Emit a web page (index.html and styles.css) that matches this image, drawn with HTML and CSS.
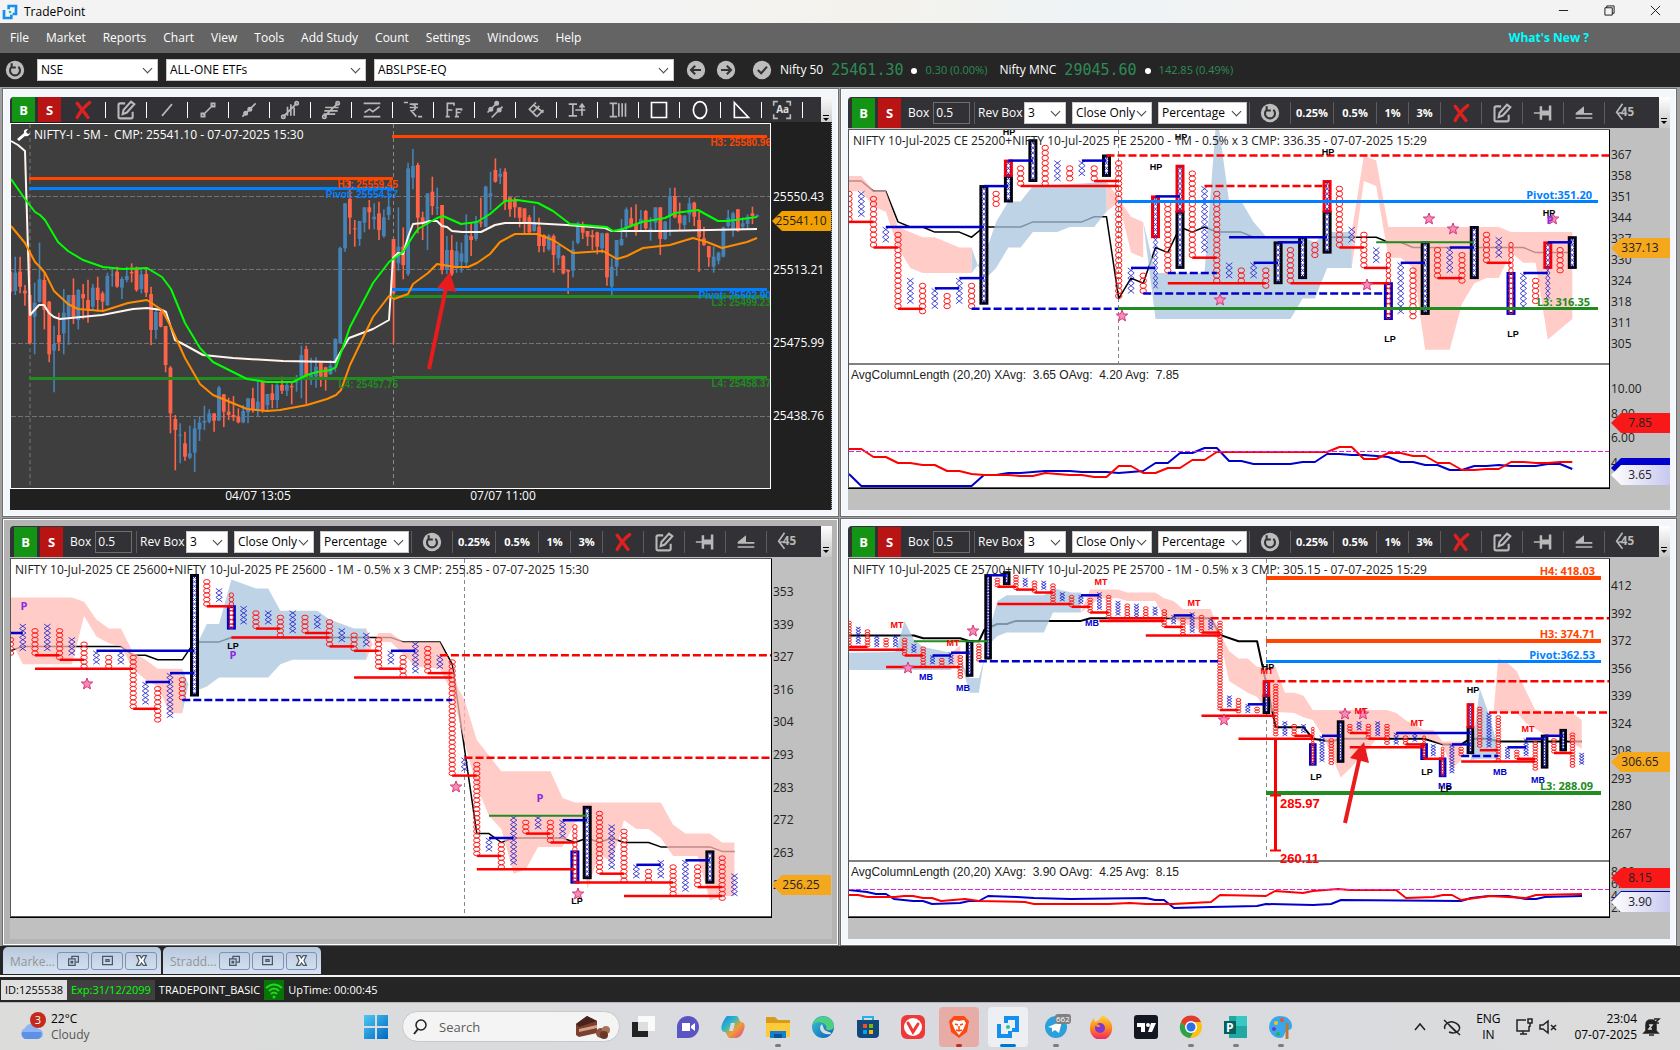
FILE: index.html
```html
<!DOCTYPE html>
<html lang="en">
<head>
    <meta charset="UTF-8">
    <meta name="viewport" content="width=device-width, initial-scale=1.0">
    <title>TradePoint</title>
    <link rel="stylesheet" href="styles.css">
</head>
<body>
    <!-- shared icons -->
    <svg class="defs" aria-hidden="true">
        <defs>
            <linearGradient id="tag-white"><stop offset="0" stop-color="#fff"/><stop offset="1" stop-color="#c8c8f0"/></linearGradient>
            <linearGradient id="win-blue" x2="1" y2="1"><stop offset="0" stop-color="#4cc8f4"/><stop offset="1" stop-color="#0067c0"/></linearGradient>
            <linearGradient id="rainbow" x2="1" y2="1"><stop offset="0" stop-color="#1a7ff0"/><stop offset=".35" stop-color="#2cb8c8"/><stop offset=".6" stop-color="#f0a030"/><stop offset="1" stop-color="#e0409a"/></linearGradient>
            <linearGradient id="fire" x2="0" y2="1"><stop offset="0" stop-color="#ffd83a"/><stop offset=".5" stop-color="#ff8a1e"/><stop offset="1" stop-color="#f0206a"/></linearGradient>
            <linearGradient id="edge" x2="1" y2="1"><stop offset="0" stop-color="#38c8d0"/><stop offset="1" stop-color="#0a5cb8"/></linearGradient>
        </defs>
        <symbol id="i-logo" viewBox="0 0 24 24"><path d="M3 9v12h11v-5M10 8V3h11v12h-5" fill="none" stroke="#1490f0" stroke-width="4"/><circle cx="12" cy="12" r="2" fill="#20c890"/></symbol>
        <symbol id="i-x" viewBox="0 0 24 24"><path d="M5 4l13 17M20 3Q10 11 5 21" fill="none" stroke="#e02020" stroke-width="4" stroke-linecap="round"/></symbol>
        <symbol id="i-edit" viewBox="0 0 24 24"><path d="M11 4H5a2 2 0 0 0-2 2v14a2 2 0 0 0 2 2h13a2 2 0 0 0 2-2v-6M8 17l1-5L18 2l4 3-9 10z" fill="none" stroke="#b8b8b8" stroke-width="2.5"/></symbol>
        <symbol id="i-refresh" viewBox="0 0 24 24"><circle cx="12" cy="12" r="11" fill="#bdbdbd"/><path d="M8 8a6 6 0 1 0 8 0M8 4v5h5" fill="none" stroke="#333" stroke-width="2.5"/></symbol>
        <symbol id="i-pin" viewBox="0 0 24 24"><path d="M1 12h9" fill="none" stroke="#b8b8b8" stroke-width="2"/><path d="M8 4h3v5h8V3h3v18h-3v-6h-8v5H8z" fill="#b8b8b8"/></symbol>
        <symbol id="i-eject" viewBox="0 0 24 24"><path d="M2 12l10-8v8z" fill="#b8b8b8"/><path d="M2 13h20M2 18h20" stroke="#b8b8b8" stroke-width="2"/></symbol>
        <symbol id="i-45" viewBox="0 0 24 24"><path d="M9 1L2 11l7 9M4 12h5" fill="none" stroke="#b8b8b8" stroke-width="2"/><text x="7" y="15" font-size="14" font-weight="bold" fill="#b8b8b8">45</text></symbol>
        <symbol id="i-restore" viewBox="0 0 16 16"><path d="M6 6V3h8v7h-3M2 6h8v8H2zM5 9h2v2H5z" fill="none" stroke="#46566c" stroke-width="1.5"/></symbol>
        <symbol id="i-max" viewBox="0 0 16 16"><path d="M2 3h12v10H2zM6 7h4v2H6z" fill="none" stroke="#46566c" stroke-width="1.5"/></symbol>
        <symbol id="i-close" viewBox="0 0 16 16"><path d="M2 2h4l2 3 2-3h4l-3 6 3 6h-4l-2-3-2 3H2l3-6z" fill="#fff" stroke="#46566c" stroke-width="1.5"/></symbol>
    </svg>

    <header class="titlebar">
        <svg class="logo"><use href="#i-logo"/></svg>
        <h1>TradePoint</h1>
        <div class="window-buttons">
            <button aria-label="Minimize"><svg viewBox="0 0 12 12"><path d="M1 6h10"/></svg></button>
            <button aria-label="Restore"><svg viewBox="0 0 12 12"><path d="M1 3h8v8H1zM3 3V1h8v8H9"/></svg></button>
            <button aria-label="Close"><svg viewBox="0 0 12 12"><path d="M1 1l10 10M11 1L1 11"/></svg></button>
        </div>
    </header>

    <nav class="menubar">
        <a href="#">File</a>
        <a href="#">Market</a>
        <a href="#">Reports</a>
        <a href="#">Chart</a>
        <a href="#">View</a>
        <a href="#">Tools</a>
        <a href="#">Add Study</a>
        <a href="#">Count</a>
        <a href="#">Settings</a>
        <a href="#">Windows</a>
        <a href="#">Help</a>
        <a href="#" class="whats-new">What's New ?</a>
    </nav>

    <div class="symbolbar">
        <button class="round" aria-label="Refresh"><svg><use href="#i-refresh"/></svg></button>
        <span class="pick exchange"><select aria-label="Exchange"><option>NSE</option></select></span>
        <span class="pick group"><select aria-label="Group"><option>ALL-ONE ETFs</option></select></span>
        <span class="pick symbol"><select aria-label="Symbol"><option>ABSLPSE-EQ</option></select></span>
        <button class="round back" aria-label="Previous"><svg viewBox="0 0 24 24"><circle cx="12" cy="12" r="11" fill="#bdbdbd"/><path d="M18 12H7M11 7l-5 5 5 5" fill="none" stroke="#333" stroke-width="2.5"/></svg></button>
        <button class="round next" aria-label="Next"><svg viewBox="0 0 24 24"><circle cx="12" cy="12" r="11" fill="#bdbdbd"/><path d="M6 12h11M13 7l5 5-5 5" fill="none" stroke="#333" stroke-width="2.5"/></svg></button>
        <button class="round check" aria-label="Apply"><svg viewBox="0 0 24 24"><circle cx="12" cy="12" r="11" fill="#bdbdbd"/><path d="M7 12l4 4 7-8" fill="none" stroke="#333" stroke-width="2.5"/></svg></button>
        <div class="quote"><span>Nifty 50</span><b>25461.30</b><i></i><em>0.30 (0.00%)</em></div>
        <div class="quote"><span>Nifty MNC</span><b>29045.60</b><i></i><em>142.85 (0.49%)</em></div>
    </div>

    <main class="mdi">
        <section class="panel">
            <div class="tools drawing">
                <button class="buy">B</button>
                <button class="sell">S</button>
                <button class="cell first" aria-label="Delete"><svg><use href="#i-x"/></svg></button>
                <button class="cell" aria-label="Edit"><svg><use href="#i-edit"/></svg></button>
                <button class="cell" aria-label="Line"><svg viewBox="0 0 24 24"><path d="M6 19L18 5"/></svg></button>
                <button class="cell" aria-label="Segment"><svg viewBox="0 0 24 24"><path d="M6 18L18 6M4 16h4v4H4zM16 4h4v4h-4z"/></svg></button>
                <button class="cell" aria-label="Ray"><svg viewBox="0 0 24 24"><path d="M4 20L20 4"/><circle cx="8" cy="16" r="2" class="solid"/><circle cx="13" cy="11" r="2" class="solid"/></svg></button>
                <button class="cell" aria-label="Vertical bars"><svg viewBox="0 0 24 24"><path d="M4 20L20 4M9 8v11M13 5v14M17 9v10"/><circle cx="4" cy="20" r="2"/><circle cx="20" cy="4" r="2"/></svg></button>
                <button class="cell" aria-label="Levels"><svg viewBox="0 0 24 24"><path d="M4 20L20 4M5 9h16M4 13h16M3 17h14"/><circle cx="4" cy="20" r="2"/><circle cx="20" cy="4" r="2"/></svg></button>
                <button class="cell" aria-label="Channel"><svg viewBox="0 0 24 24"><path d="M2 4h20M2 20h20M3 15l6-4 4 3 8-6"/></svg></button>
                <button class="cell" aria-label="Rupee"><svg viewBox="0 0 24 24"><path d="M1 3h5M8 5h10M8 9h10M10 5c7 0 6 8 0 8l6 7M18 20h5"/></svg></button>
                <button class="cell" aria-label="Fibonacci"><svg viewBox="0 0 24 24"><path d="M4 20V4h8v3M4 12h6M2 20h5M15 20v-9h6v2M15 15h5M13 20h5"/></svg></button>
                <button class="cell" aria-label="Parallel"><svg viewBox="0 0 24 24"><path d="M3 15L15 3M8 21L21 8"/><circle cx="7" cy="11" r="2" class="solid"/><circle cx="14" cy="4" r="2" class="solid"/><circle cx="17" cy="12" r="2" class="solid"/></svg></button>
                <button class="cell" aria-label="Pitchfork"><svg viewBox="0 0 24 24"><path d="M12 3L4 11l9 9M9 6l12 9M8 15l8-8M13 20l8-8"/></svg></button>
                <button class="cell" aria-label="Text"><svg viewBox="0 0 24 24"><path d="M2 5h10M2 19h10M7 5v14M10 12h12M18 5v14M15 9l3-4 3 4"/></svg></button>
                <button class="cell" aria-label="Text rows"><svg viewBox="0 0 24 24"><path d="M2 4h9M2 20h9M6 4v16M13 4v16M17 4v16M21 4v16"/></svg></button>
                <button class="cell white" aria-label="Rectangle"><svg viewBox="0 0 24 24"><path d="M3 3h18v18H3z"/></svg></button>
                <button class="cell white" aria-label="Ellipse"><svg viewBox="0 0 24 24"><ellipse cx="12" cy="12" rx="8" ry="10"/></svg></button>
                <button class="cell white" aria-label="Triangle"><svg viewBox="0 0 24 24"><path d="M4 3v18h17z"/></svg></button>
                <button class="cell" aria-label="Label"><svg viewBox="0 0 24 24"><path d="M2 7V2h5M17 2h5v5M22 17v5h-5M7 22H2v-5"/><text x="5" y="16" font-size="12">Aa</text></svg></button>
                <span class="cell last"></span>
                <span class="more"></span>
            </div>
            <svg class="chart" id="nifty" viewBox="10 122 822 388"></svg>
        </section>

        <section class="panel">
            <div class="tools">
                <button class="buy">B</button>
                <button class="sell">S</button>
                <label class="box">Box <input type="text" value="0.5"></label>
                <label class="rev">Rev Box <span class="pick"><select><option>3</option></select></span></label>
                <span class="pick method"><select aria-label="Method"><option>Close Only</option></select></span>
                <span class="pick scale"><select aria-label="Scale"><option>Percentage</option></select></span>
                <button class="cell" aria-label="Refresh"><svg><use href="#i-refresh"/></svg></button>
                <button class="cell pct">0.25%</button>
                <button class="cell pct">0.5%</button>
                <button class="cell one">1%</button>
                <button class="cell one">3%</button>
                <button class="cell" aria-label="Delete"><svg><use href="#i-x"/></svg></button>
                <button class="cell" aria-label="Edit"><svg><use href="#i-edit"/></svg></button>
                <button class="cell" aria-label="Pin"><svg><use href="#i-pin"/></svg></button>
                <button class="cell" aria-label="Eject"><svg><use href="#i-eject"/></svg></button>
                <button class="cell" aria-label="45 degrees"><svg><use href="#i-45"/></svg></button>
                <span class="more"></span>
            </div>
            <svg class="chart" id="straddle-25200" viewBox="848 128 822 382"></svg>
        </section>

        <section class="panel active">
            <div class="tools">
                <button class="buy">B</button>
                <button class="sell">S</button>
                <label class="box">Box <input type="text" value="0.5"></label>
                <label class="rev">Rev Box <span class="pick"><select><option>3</option></select></span></label>
                <span class="pick method"><select aria-label="Method"><option>Close Only</option></select></span>
                <span class="pick scale"><select aria-label="Scale"><option>Percentage</option></select></span>
                <button class="cell" aria-label="Refresh"><svg><use href="#i-refresh"/></svg></button>
                <button class="cell pct">0.25%</button>
                <button class="cell pct">0.5%</button>
                <button class="cell one">1%</button>
                <button class="cell one">3%</button>
                <button class="cell" aria-label="Delete"><svg><use href="#i-x"/></svg></button>
                <button class="cell" aria-label="Edit"><svg><use href="#i-edit"/></svg></button>
                <button class="cell" aria-label="Pin"><svg><use href="#i-pin"/></svg></button>
                <button class="cell" aria-label="Eject"><svg><use href="#i-eject"/></svg></button>
                <button class="cell" aria-label="45 degrees"><svg><use href="#i-45"/></svg></button>
                <span class="more"></span>
            </div>
            <svg class="chart" id="straddle-25600" viewBox="10 557 822 382"></svg>
        </section>

        <section class="panel">
            <div class="tools">
                <button class="buy">B</button>
                <button class="sell">S</button>
                <label class="box">Box <input type="text" value="0.5"></label>
                <label class="rev">Rev Box <span class="pick"><select><option>3</option></select></span></label>
                <span class="pick method"><select aria-label="Method"><option>Close Only</option></select></span>
                <span class="pick scale"><select aria-label="Scale"><option>Percentage</option></select></span>
                <button class="cell" aria-label="Refresh"><svg><use href="#i-refresh"/></svg></button>
                <button class="cell pct">0.25%</button>
                <button class="cell pct">0.5%</button>
                <button class="cell one">1%</button>
                <button class="cell one">3%</button>
                <button class="cell" aria-label="Delete"><svg><use href="#i-x"/></svg></button>
                <button class="cell" aria-label="Edit"><svg><use href="#i-edit"/></svg></button>
                <button class="cell" aria-label="Pin"><svg><use href="#i-pin"/></svg></button>
                <button class="cell" aria-label="Eject"><svg><use href="#i-eject"/></svg></button>
                <button class="cell" aria-label="45 degrees"><svg><use href="#i-45"/></svg></button>
                <span class="more"></span>
            </div>
            <svg class="chart" id="straddle-25700" viewBox="848 557 822 382"></svg>
        </section>
    </main>

    <div class="minimized">
        <div class="mini"><span>Marke...</span>
            <button aria-label="Restore"><svg><use href="#i-restore"/></svg></button>
            <button aria-label="Maximize"><svg><use href="#i-max"/></svg></button>
            <button aria-label="Close"><svg><use href="#i-close"/></svg></button>
        </div>
        <div class="mini"><span>Stradd...</span>
            <button aria-label="Restore"><svg><use href="#i-restore"/></svg></button>
            <button aria-label="Maximize"><svg><use href="#i-max"/></svg></button>
            <button aria-label="Close"><svg><use href="#i-close"/></svg></button>
        </div>
    </div>

    <div class="statusbar">
        <span class="id">ID:1255538</span>
        <span class="exp">Exp:31/12/2099</span>
        <span class="plan">TRADEPOINT_BASIC</span>
        <svg class="wifi" viewBox="0 0 20 20"><path d="M2 8q8-7 16 0M5 11q5-5 10 0M7 14q3-3 6 0" fill="none" stroke="#28d428" stroke-width="2"/><circle cx="10" cy="17" r="1.5" fill="#28d428"/></svg>
        <span class="uptime">UpTime: 00:00:45</span>
    </div>

    <footer class="taskbar">
        <div class="weather">
            <svg viewBox="0 0 30 30"><path d="M8 27a6 6 0 0 1 0-11 7 7 0 0 1 13 1 5 5 0 0 1 0 10z" fill="#8db4f4"/><path d="M8 27a6 6 0 0 1-3-7h19a5 5 0 0 1-3 7z" fill="#5f90e8"/><circle cx="21" cy="8" r="8" fill="#c42b1c"/><text x="21" y="12" font-size="11" text-anchor="middle" fill="#fff">3</text></svg>
            <p>22°C<br><span>Cloudy</span></p>
        </div>
        <nav class="apps">
            <a href="#" class="start" aria-label="Start"><svg viewBox="0 0 24 24"><path d="M0 0h11v11H0zM13 0h11v11H13zM0 13h11v11H0zM13 13h11v11H13z" fill="url(#win-blue)"/></svg></a>
            <label class="search">
                <svg viewBox="0 0 16 16"><circle cx="8" cy="6" r="5" fill="none" stroke="#222" stroke-width="1.5"/><path d="M5 10l-4 5" stroke="#222" stroke-width="2"/></svg>
                <input type="search" placeholder="Search">
                <svg class="cake" viewBox="0 0 36 24"><path d="M1 9L12 1l10 5v12L4 22 1 20z" fill="#7a4030"/><path d="M1 9L12 1l10 5L4 12z" fill="#4a241c"/><path d="M4 14l18-4v3L4 17z" fill="#d8a088"/><circle cx="26" cy="18" r="5" fill="#8a5440"/><circle cx="31" cy="15" r="4" fill="#a87458"/><circle cx="29" cy="20" r="4" fill="#6a3828"/></svg>
            </label>
            <a href="#" aria-label="Task view"><svg viewBox="0 0 24 24"><path d="M1 7h16v15H1z" fill="#222"/><path d="M7 1h17v15H7z" fill="#fff" opacity=".85"/></svg></a>
            <a href="#" aria-label="Chat"><svg viewBox="0 0 24 24"><path d="M1 23V12a11 11 0 1 1 11 11z" fill="#5a54c4"/><path d="M6 8h8v8H6zM15 11l4-3v8l-4-3z" fill="#fff"/></svg></a>
            <a href="#" aria-label="Copilot"><svg viewBox="0 0 24 24"><path d="M7 1h8c3 0 3 5 5 6 5 0 4 6 2 10s-4 6-8 6H9c-3 0-3-5-5-6-5 0-4-6-2-10S5 1 7 1z" fill="url(#rainbow)"/><path d="M10 8h4l-2 8H8z" fill="#dadbe0"/></svg></a>
            <a href="#" class="open" aria-label="Explorer"><svg viewBox="0 0 24 24"><path d="M0 2h9l3 3h12v17H0z" fill="#d89a18"/><path d="M0 8h24v14H0z" fill="#fccb3c"/><path d="M4 16h16v7H4z" fill="#1680d0"/><path d="M8 19h8v4H8z" fill="#0a5494"/></svg></a>
            <a href="#" aria-label="Edge"><svg viewBox="0 0 24 24"><circle cx="12" cy="12" r="11" fill="url(#edge)"/><path d="M2 9C6-2 23 0 23 11c0 5-7 5-8 3 2-5-6-9-13-5z" fill="#4cd080"/><path d="M11 9c-5 4 0 12 9 10 2-2-6-2-7-5z" fill="#dadbe0"/></svg></a>
            <a href="#" aria-label="Store"><svg viewBox="0 0 24 24"><path d="M7 6V2h10v4" fill="none" stroke="#24b0e8" stroke-width="2"/><path d="M1 5h22v14q0 4-4 4H5q-4 0-4-4z" fill="#12487c"/><path d="M7 9h4v4H7z" fill="#f25022"/><path d="M13 9h4v4h-4z" fill="#7fba00"/><path d="M7 15h4v4H7z" fill="#00a4ef"/><path d="M13 15h4v4h-4z" fill="#ffb900"/></svg></a>
            <a href="#" aria-label="Vivaldi"><svg viewBox="0 0 24 24"><rect width="24" height="24" rx="6" fill="#ef3939"/><circle cx="12" cy="12" r="9" fill="#fff"/><path d="M7 8l5 9 5-8" fill="none" stroke="#ef3939" stroke-width="3" stroke-linecap="round"/></svg></a>
            <a href="#" class="open alert" aria-label="Brave"><svg viewBox="0 0 24 24"><path d="M7 1h10l5 5-2 11-8 6-8-6L2 6z" fill="#fb4a14"/><path d="M7 5l5 1 5-1 2 3-3 7-4 5-4-5-3-7z" fill="#fff"/><path d="M8 9l3 1M16 9l-3 1M12 11v5M9 15l3 1 3-1" stroke="#fb4a14" stroke-width="1.5"/></svg></a>
            <a href="#" class="open current" aria-label="TradePoint"><svg><use href="#i-logo"/></svg></a>
            <a href="#" class="open badge" aria-label="Telegram"><svg viewBox="0 0 24 24"><circle cx="12" cy="12" r="11" fill="#2aa0dc"/><path d="M4 12l14-6-3 12-4-3-3 2v-4z" fill="#fff"/></svg><span>662</span></a>
            <a href="#" aria-label="Firefox"><svg viewBox="0 0 24 24"><path d="M13 0c8 4 11 9 10 14a11 11 0 0 1-22 0C1 8 3 5 5 3l1 4c3-1 6-4 7-7z" fill="url(#fire)"/><circle cx="11" cy="13" r="5" fill="#8038d0"/><path d="M6 9q5 0 5 3H8z" fill="#ff9a1e"/></svg></a>
            <a href="#" aria-label="TradingView"><svg viewBox="0 0 24 24"><rect width="24" height="24" rx="3" fill="#131722"/><path d="M3 8h8v9H7v-5H3zM17 8h5l-4 9h-4z" fill="#fff"/><circle cx="14" cy="10" r="2" fill="#fff"/></svg></a>
            <a href="#" class="open" aria-label="Chrome"><svg viewBox="0 0 24 24"><circle cx="12" cy="12" r="11" fill="#fbc116"/><path d="M2 7a11 11 0 0 1 20 0H12L8 14z" fill="#e33b2e"/><path d="M2 7a11 11 0 0 0 9 16l5-9H8z" fill="#2ba24c"/><circle cx="12" cy="12" r="6" fill="#fff"/><circle cx="12" cy="12" r="4.5" fill="#2a6fe8"/></svg></a>
            <a href="#" class="open" aria-label="Publisher"><svg viewBox="0 0 24 24"><path d="M5 1h18v22H5z" fill="#20a8a4"/><path d="M12 1h11v10H12z" fill="#38c8c4"/><path d="M0 6h12v13H0z" fill="#04605e"/><text x="2" y="17" font-size="12" font-weight="bold" fill="#fff">P</text></svg></a>
            <a href="#" class="open" aria-label="Paint"><svg viewBox="0 0 24 24"><path d="M11 1c8 0 12 5 12 10s-4 3-6 5-1 7-6 7A11 11 0 0 1 11 1z" fill="#38a8ec"/><circle cx="7" cy="8" r="2" fill="#f4c020"/><circle cx="13" cy="5" r="2" fill="#f05030"/><circle cx="5" cy="14" r="2" fill="#6a3cc8"/><circle cx="9" cy="19" r="2" fill="#28b050"/><path d="M18 8v16" stroke="#b87838" stroke-width="3"/></svg></a>
        </nav>
        <div class="tray">
            <svg viewBox="0 0 20 20"><path d="M5 13l5-6 5 6"/></svg>
            <svg viewBox="0 0 20 20"><path d="M2 3l16 15M3 12c-2-4 4-8 8-7s8 4 6 8-8 3-10 2M7 8l7 7"/></svg>
            <p class="lang">ENG<br>IN</p>
            <svg class="net" viewBox="0 0 20 20"><path d="M12 3H3v11h12V9M9 14v3M6 17h7M14 2h4v4h-4zM16 6v4"/></svg>
            <svg class="net" viewBox="0 0 20 20"><path d="M2 8h3l5-4v12l-5-4H2zM13 8l5 5M18 8l-5 5"/></svg>
            <p class="clock">23:04<br>07-07-2025</p>
            <svg class="bell" viewBox="0 0 20 20"><path d="M4 14V8q0-5 5-5 5 0 5 5v6l2 2H2z" fill="#222"/><path d="M7 18h5M12 2h5l-4 4h4" stroke="#222"/><path d="M7 8h3l-3 4h3" stroke="#ddd"/></svg>
        </div>
    </footer>

    <script src="charts.js"></script>
</body>
</html>
```
FILE: styles.css
```css
* {
    box-sizing: border-box;
}

body {
    display: flex;
    flex-direction: column;
    min-height: 100vh;
    margin: 0;
    background-color: #252525;
    font-family: "Open Sans", "Noto Sans", sans-serif;
    font-size: 12px;
    line-height: 16px;
}

button, select, input {
    font: inherit;
    color: inherit;
    margin: 0;
    padding: 0;
    border: 0;
    background: none;
}

a {
    color: inherit;
    text-decoration: none;
}

p {
    margin: 0;
}

.defs {
    position: absolute;
    width: 0;
    height: 0;
}

/* title and menu */
.titlebar {
    display: flex;
    align-items: center;
    height: 23px;
    padding-left: 2px;
    background: linear-gradient(90deg, #f3f3f3 40%, #f4f2ec 52%, #eef3f6 65%, #f3f3f3 75%);
}

.titlebar h1 {
    margin: 0 0 0 6px;
    font-size: 12px;
    font-weight: normal;
}

.logo {
    width: 16px;
    height: 16px;
}

.window-buttons {
    display: flex;
    margin-left: auto;
    padding-right: 2px;
}

.window-buttons button {
    width: 46px;
    height: 23px;
}

.window-buttons svg {
    width: 11px;
    height: 11px;
    fill: none;
    stroke: #111;
}

.menubar {
    display: flex;
    align-items: center;
    gap: 17px;
    height: 30px;
    padding: 0 91px 0 10px;
    background-color: #646464;
    color: #fff;
}

.whats-new {
    margin-left: auto;
    color: #00ffff;
    font-weight: bold;
}

/* symbol row */
.symbolbar {
    display: flex;
    align-items: center;
    height: 34px;
    padding-left: 5px;
    color: #fff;
}

.round, .round svg {
    display: block;
    width: 20px;
    height: 20px;
}

.pick {
    position: relative;
    display: inline-block;
    height: 22px;
    background-color: #fff;
    border: 1px solid #c8c8c8;
    color: #000;
}

.pick select {
    appearance: none;
    display: block;
    width: 100%;
    height: 20px;
    padding-left: 3px;
}

.pick::after {
    content: "";
    position: absolute;
    right: 6px;
    top: 5px;
    width: 6px;
    height: 6px;
    border: solid #444;
    border-width: 0 1px 1px 0;
    transform: rotate(45deg);
    pointer-events: none;
}

.exchange {
    width: 121px;
    margin-left: 12px;
}

.group {
    width: 200px;
    margin-left: 8px;
}

.symbol {
    width: 300px;
    margin-left: 8px;
}

.back {
    margin-left: 12px;
}

.next {
    margin-left: 10px;
}

.check {
    margin: 0 8px 0 16px;
}

.quote {
    display: flex;
    align-items: center;
    gap: 8px;
    margin-right: 12px;
}

.quote b {
    color: #2e8b57;
    font: 15px "DejaVu Sans Mono", monospace;
}

.quote i {
    width: 6px;
    height: 6px;
    margin-top: 2px;
    border-radius: 50%;
    background-color: #fff;
}

.quote em {
    color: #2e8b57;
    font-style: normal;
    font-size: 11px;
}

/* chart windows */
.mdi {
    display: grid;
    grid-template-columns: 1fr 1fr;
    gap: 1px;
    padding: 1px 3px 0 2px;
    background-color: #a0a0a0;
}

.panel {
    min-width: 0;
    padding: 8px 6px 6px 7px;
    background-color: #f3f7fc;
    border: 1px solid #6e6e6e;
    box-shadow: inset 0 0 0 1px #fff;
}

.panel:nth-child(n+3) {
    padding-top: 7px;
}

.panel.active {
    background-color: #b4b4b4;
}

.tools {
    display: flex;
    align-items: center;
    height: 31px;
    padding-left: 4px;
    background-color: #323236;
    border-radius: 4px 0 0 0;
    color: #fff;
    overflow: hidden;
}

.tools.drawing {
    height: 25px;
    padding-left: 2px;
}

.buy, .sell {
    width: 23px;
    height: 30px;
    margin-right: 3px;
    background-color: #149414;
    font: bold 13px "Open Sans", sans-serif;
    flex-shrink: 0;
}

.sell {
    margin-right: 0;
    background-color: #b81414;
}

.box {
    display: flex;
    align-items: center;
    gap: 4px;
    width: 74px;
    height: 22px;
    padding-left: 7px;
    border-right: 1px solid #5c5c5c;
}

.box input {
    width: 37px;
    height: 22px;
    padding-left: 2px;
    border: 1px solid #6e6e6e;
    margin-left: auto;
    margin-right: 5px;
}

.rev {
    display: flex;
    align-items: center;
    justify-content: space-between;
    width: 91px;
    padding-left: 3px;
    white-space: nowrap;
}

.rev .pick {
    width: 42px;
}

.method {
    width: 80px;
    margin-left: 6px;
}

.scale {
    width: 89px;
    margin: 0 2px 0 6px;
}

.tools .pick::after {
    right: 6px;
}

.cell {
    display: flex;
    align-items: center;
    justify-content: center;
    width: 41px;
    height: 22px;
    border-left: 1px solid #5c5c5c;
    flex-shrink: 0;
    font-weight: bold;
    font-size: 11px;
}

.cell svg {
    width: 20px;
    height: 20px;
    fill: none;
    stroke: #b8b8b8;
    stroke-width: 2;
}

.cell svg use, .cell svg text {
    stroke: none;
}

.cell svg text {
    fill: #ddd;
}

.solid {
    fill: #b8b8b8;
}

.white svg {
    stroke: #fff;
}

.pct {
    width: 43px;
}

.one {
    width: 32px;
}

.drawing .cell {
    height: 16px;
    border-color: #fff;
}

.drawing .first {
    width: 44px;
    border: 0;
}

.drawing .last {
    width: 17px;
}

.more {
    width: 11px;
    height: 31px;
    margin-left: auto;
    background: linear-gradient(#fff, #c8c8c8);
    flex-shrink: 0;
    position: relative;
}

.more::before {
    content: "";
    position: absolute;
    left: 2px;
    bottom: 9px;
    width: 6px;
    height: 1px;
    background-color: #000;
}

.more::after {
    content: "";
    position: absolute;
    left: 2px;
    bottom: 4px;
    border: 3px solid transparent;
    border-top-color: #000;
    border-bottom: 0;
}

.chart {
    display: block;
    width: 100%;
    height: auto;
}

/* chart texts */
.chart text {
    font-family: "Open Sans", "Noto Sans", sans-serif;
    font-size: 12px;
}

.chart .level {
    font: bold 11px "Open Sans", sans-serif;
}

.chart .mark {
    font: bold 9px "Liberation Sans", sans-serif;
}

.chart .wide {
    font: bold 10px "Liberation Sans", sans-serif;
}

.chart .study {
    font: 12px "Liberation Sans", sans-serif;
}

.chart .target {
    font: bold 13px "Liberation Sans", sans-serif;
}

/* minimized windows */
.minimized {
    display: flex;
    flex-grow: 1;
    gap: 2px;
    height: 31px;
    padding: 1px 0 1px 3px;
    border-bottom: 2px solid #f4f4f4;
}

.mini {
    display: flex;
    align-items: center;
    gap: 2px;
    width: 158px;
    padding: 0 4px 0 7px;
    background: linear-gradient(#b8c8dc, #d8e4f2);
    border-radius: 5px 5px 0 0;
    color: #949494;
}

.mini span {
    flex-grow: 1;
    padding-top: 3px;
}

.mini button {
    width: 32px;
    height: 18px;
    border: 1px solid #7d92b4;
    border-radius: 3px;
}

.mini svg {
    display: block;
    width: 13px;
    height: 13px;
    margin: 0 auto;
}

.statusbar {
    display: flex;
    align-items: center;
    height: 25px;
    padding-left: 1px;
    color: #fff;
}

.statusbar span {
    height: 20px;
    padding: 2px 4px;
    font-size: 11px;
    white-space: nowrap;
}

.statusbar .id {
    background-color: #e0e0e0;
    color: #000;
}

.statusbar .exp {
    background-color: #404040;
    color: #00ff00;
}

.wifi {
    width: 20px;
    height: 20px;
    background-color: #067406;
}

/* taskbar */
.taskbar {
    display: flex;
    align-items: center;
    height: 48px;
    background: linear-gradient(90deg, #dcdcda, #d8dae0 60%, #dcdcdc);
    border-top: 1px solid #b8b8b8;
}

.weather {
    display: flex;
    align-items: center;
    gap: 4px;
    width: 355px;
    padding-left: 17px;
}

.weather svg {
    width: 30px;
    height: 30px;
}

.weather span {
    color: #555;
}

.apps {
    display: flex;
    align-items: center;
}

.apps a {
    position: relative;
    display: flex;
    align-items: center;
    justify-content: center;
    width: 45px;
    height: 40px;
}

.apps a svg {
    width: 24px;
    height: 24px;
}

.apps .start {
    width: 42px;
    margin-right: 5px;
}

.search {
    display: flex;
    align-items: center;
    gap: 10px;
    width: 218px;
    height: 31px;
    padding: 0 8px 0 10px;
    background-color: #f4f4f4;
    border: 1px solid #c8c8c8;
    border-radius: 16px;
}

.search svg {
    width: 16px;
    height: 16px;
    flex-shrink: 0;
}

.search input {
    width: 100%;
    font-size: 13px;
}

.search input::placeholder {
    color: #5c5c5c;
}

.search .cake {
    width: 36px;
    height: 24px;
}

.apps .open::after {
    content: "";
    position: absolute;
    bottom: 0;
    width: 6px;
    height: 3px;
    border-radius: 2px;
    background-color: #7c7c7c;
}

.apps .alert {
    width: 40px;
    margin: 0 4px;
    background-color: #e8aca6;
    border-radius: 4px;
}

.apps .alert::after {
    background-color: #c42b1c;
}

.apps .current {
    width: 40px;
    margin: 0 5px;
    background-color: #eeeff2;
    border-radius: 4px;
}

.apps .current::after {
    width: 16px;
    background-color: #0078d4;
}

.badge span {
    position: absolute;
    top: 7px;
    left: 22px;
    padding: 0 1px;
    border-radius: 3px;
    background-color: #808080;
    color: #fff;
    font-size: 8px;
    line-height: 10px;
}

.tray {
    display: flex;
    align-items: center;
    gap: 12px;
    margin-left: auto;
    padding-right: 18px;
}

.tray svg {
    width: 20px;
    height: 20px;
    fill: none;
    stroke: #222;
    stroke-width: 1.5;
}

.lang {
    width: 28px;
    text-align: center;
}

.tray .net + .net {
    margin-left: -8px;
}

.clock {
    text-align: right;
    margin-left: 4px;
}

.tray .bell {
    margin-left: -7px;
}
```
FILE: charts.js
```javascript
const RED = "#ff0000", BLUE = "#0000cd", GREEN = "#228b22", ORANGE = "#ff4500", SKY = "#0080ff", BLACK = "#000";

function line(x1, y1, x2, y2, color, width, dash) {
    return `<line x1="${x1}" y1="${y1}" x2="${x2}" y2="${y2}" stroke="${color}" stroke-width="${width}"${dash ? ` stroke-dasharray="${dash}"` : ""}/>`;
}

function text(x, y, str, color, cls, anchor) {
    return `<text x="${x}" y="${y}" fill="${color}" class="${cls || ""}" text-anchor="${anchor || "start"}" xml:space="preserve">${str}</text>`;
}

function poly(points, color, width) {
    return `<polyline points="${points}" fill="none" stroke="${color}" stroke-width="${width}" stroke-linejoin="round"/>`;
}

function rect(x, y, w, h, fill, extra) {
    return `<rect x="${x}" y="${y}" width="${w}" height="${h}" fill="${fill}" ${extra || ""}/>`;
}

// price tag that points at the axis
function tag(x, y, str, fill, color) {
    return `<path d="M${x} ${y}l10 -10h49v20h-49z" fill="${fill}"/>` + text(x + 29, y + 4, str, color || "#222", "", "middle");
}

function star(x, y) {
    let pts = "";
    for (let i = 0; i < 10; i++) {
        const r = i % 2 ? 2.6 : 6;
        const a = Math.PI * (i / 5 - 0.5);
        pts += `${(x + r * Math.cos(a)).toFixed(1)},${(y + r * Math.sin(a)).toFixed(1)} `;
    }
    return `<polygon points="${pts}" fill="#f48cb4" stroke="#d8327c"/>`;
}

function arrow(x1, y1, x2, y2, head) {
    return line(x1, y1, x2, y2, "#e81c1c", 4) + `<polygon points="${head}" fill="#e81c1c"/>`;
}

function clip(id, x, y, w, h) {
    return `<clipPath id="${id}"><rect x="${x}" y="${y}" width="${w}" height="${h}"/></clipPath>`;
}

// point and figure chart: columns alternate O and X, rows count boxes downwards
function pointFigure(c) {
    const px = i => +(c.x0 + i * c.dx).toFixed(1);
    const py = r => +(c.y0 + r * c.dy).toFixed(1);
    const pts = s => s.split(" ").map(p => p.split(",")).map(p => `${px(+p[0])},${py(+p[1])}`).join(" ");
    let out = "";

    out += line(c.session, c.top, c.session, c.split || c.bottom, "#888", 1, "4 3");
    out += poly(pts(c.average), BLACK, c.thick || 1.5);
    c.pink.forEach(b => out += `<polygon points="${pts(b)}" fill="#ffbbb6" opacity=".75"/>`);
    c.blue.forEach(b => out += `<polygon points="${pts(b)}" fill="#a8c4dc" opacity=".75"/>`);

    c.boxes.forEach(([i, a, b, color]) => {
        out += rect(px(i) - c.bw, py(a - 0.4), c.bw * 2, py(b + 0.4) - py(a - 0.4), "#fff", `stroke="${color}" stroke-width="3"`);
    });

    let xs = "", os = "";
    c.columns.split(" ").forEach((col, i) => {
        const [a, b] = col.split(",").map(Number);
        const boxed = c.boxes.some(box => box[0] === i);
        for (let r = a; r <= b; r++) {
            const x = px(i), y = py(r), w = boxed ? c.rx - 1 : c.rx, h = c.dy / 2;
            if (i % 2) {
                xs += `M${x - w} ${y - h}L${x + w} ${y + h}M${x + w} ${y - h}L${x - w} ${y + h}`;
            } else {
                os += `M${x - w} ${y}a${w} ${h} 0 1 0 ${w * 2} 0a${w} ${h} 0 1 0 ${-w * 2} 0`;
            }
        }
    });
    out += `<path d="${xs}" stroke="#1c1ccc" stroke-width=".8"/>`;
    out += `<path d="${os}" fill="none" stroke="#ff1a1a" stroke-width="1"/>`;

    const flat = (s, color, dash, w) => s.split(" ").forEach(l => {
        const [a, b, r] = l.split(",").map(Number);
        out += line(px(a), py(r), b > 99 ? b : px(b), py(r), color, w, dash);
    });
    flat(c.sell, RED, "", 2.5);
    flat(c.buy, BLUE, "", 2.5);
    flat(c.green, GREEN, "", 2);
    flat(c.buyDash, BLUE, "8 3", 2.5);
    flat(c.sellDash, RED, "8 3", 2.5);
    c.levels.forEach(l => out += line(l[0], l[1], l[2], l[1], l[3], l[4] || 3));
    return out;
}

function frame(id, c, body, axis) {
    const x = c.left, w = 761;
    document.getElementById(id).innerHTML =
        clip(id + "-clip", x, c.top, w, c.bottom - c.top) +
        rect(x - 1, c.top - 2, 823, 384, "#c0c0c0") +
        rect(x, c.top, w, c.bottom - c.top, "#fff") +
        `<g clip-path="url(#${id}-clip)">${body}</g>` +
        rect(x + 0.5, c.top - 0.5, w, c.bottom - c.top, "none", 'stroke="#555"') +
        line(x - 1, c.bottom + 0.5, x + w + 1, c.bottom + 0.5, BLACK, 1) +
        line(x + w + 0.5, c.top, x + w + 0.5, c.bottom + 1, BLACK, 1) + axis;
}

function scale(x, y, step, labels, color) {
    return labels.split(" ").map((l, i) => text(x, Math.round(y + i * step) + 4, l, color || "#222")).join("");
}

/* NIFTY-I candles: colour, high, body top, body bottom, low (three steps per pixel) */
const candles = `r,415,455,515,520 b,410,458,513,525 r,410,455,500,520 r,495,512,520,557 r,390,525,670,672
b,488,548,590,703 b,368,478,545,548 r,455,480,570,628 r,543,545,703,727 b,617,672,692,817
r,578,645,667,693 b,507,578,640,703 b,525,525,590,675 r,475,525,590,612 b,507,510,600,628
r,492,522,535,598 r,479,540,568,608 b,492,503,560,570 r,470,503,540,575 r,514,520,545,570
b,458,468,555,558 b,450,463,465,500 r,440,455,500,503 b,470,477,503,537 b,440,468,480,487
r,430,456,460,487 r,440,445,510,515 b,448,463,507,520 r,450,462,518,531 r,500,522,630,676
b,563,576,630,658 r,570,576,620,622 r,618,618,735,757 r,738,743,880,940 r,885,897,930,1051
b,910,944,946,1030 r,935,970,1010,1022 b,917,1000,1013,1018 b,897,925,998,1056 b,888,908,928,963
b,857,903,908,930 b,868,880,905,910 r,880,880,902,935 b,798,803,902,903 r,822,823,875,921
r,833,875,885,900 r,828,885,892,903 r,865,890,907,910 b,855,873,907,910 b,835,835,877,910
r,803,835,870,878 b,772,845,873,888 r,785,785,873,878 b,822,822,855,872 r,793,820,840,865
b,790,795,840,865 r,770,795,812,822 b,785,795,812,828 r,787,798,802,853 b,765,785,785,815
b,677,705,770,835 r,677,687,770,852 b,713,765,775,795 b,712,740,770,803 r,728,728,770,800
r,740,742,772,812 b,720,737,762,765 b,655,657,730,755 b,380,384,670,672 b,250,250,385,395
r,183,237,293,343 r,300,325,328,380 b,303,303,357,378 b,262,262,308,337 r,240,262,277,328
b,250,290,298,328 r,245,280,330,360 b,268,292,348,353 b,222,260,285,300 r,357,357,520,672
b,262,380,430,452 r,322,380,435,478 b,128,145,462,468 b,87,138,173,208 r,128,135,293,340
r,275,292,308,360 b,220,220,310,390 r,170,215,258,285 b,203,262,265,285 r,255,255,450,463
b,348,390,450,463 r,345,390,463,468 b,365,393,445,458 b,368,400,425,458 b,283,345,428,440
r,307,348,360,408 b,288,305,357,362 r,233,307,310,322 b,197,200,320,322 b,155,220,228,270
r,115,150,185,188 b,145,162,170,192 r,145,155,245,270 r,232,232,268,290 r,232,243,262,293
r,262,262,293,322 r,265,265,312,340 r,285,292,337,345 b,257,308,333,335 r,293,320,378,397
r,343,345,378,397 b,343,347,388,392 r,343,348,405,458 b,375,375,415,435 r,405,408,460,463
r,450,450,455,522 b,362,388,452,472 b,305,310,368,373 r,305,315,338,357 r,333,333,350,378
r,330,345,352,390 r,335,337,380,403 b,338,340,385,400 r,338,340,472,497 b,415,440,500,525
b,360,360,440,468 b,297,357,375,378 b,262,268,325,352 r,262,295,318,322 r,253,310,330,347
b,270,297,310,335 r,270,273,325,335 b,292,325,330,362 b,262,262,308,332 r,262,262,357,405
b,303,305,357,360 b,203,228,285,348 r,203,228,292,295 r,248,285,310,330 b,285,287,315,328
b,232,250,283,307 r,245,248,290,318 r,275,300,352,455 r,320,355,375,378 r,377,378,412,440
b,380,410,440,458 b,395,398,422,433 b,320,322,410,412 b,270,293,318,323 b,275,280,330,350
r,267,268,333,335 b,292,310,320,328 b,283,290,312,328 r,260,280,288,312 b,283,286,290,292`;

function drawNifty() {
    const y = v => 120 + v / 3;
    let body = "";
    [196, 269, 343, 416].forEach(g => body += line(11, g + 0.5, 770, g + 0.5, "#747474", 1, "5 2"));
    body += line(30, 124, 30, 488, "#777", 1, "4 3") + line(393.5, 124, 393.5, 488, "#888", 1, "4 3");

    candles.split(/\s+/).forEach((c, i) => {
        const p = c.split(",");
        const color = p[0] === "r" ? "#ff6347" : "#4682b4";
        const x = 10.4 + i * 4.85;
        const [hi, a, b, lo] = p.slice(1).map(v => y(+v));
        body += line(x, hi, x, lo, color, 1.6) + rect(x - 1.9, a, 3.8, Math.max(1, b - a), color);
    });

    body += line(29, 178.5, 393, 178.5, ORANGE, 3) + line(29, 188.5, 393, 188.5, SKY, 3) + line(29, 378.5, 393, 378.5, GREEN, 3);
    body += line(392, 136.5, 767, 136.5, ORANGE, 3) + line(392, 289.5, 767, 289.5, SKY, 3);
    body += line(392, 296.5, 767, 296.5, GREEN, 3) + line(392, 377.5, 767, 377.5, GREEN, 3);

    body += poly("11,141 18,145 25,151 30,315 39,305 44,305 49,313 54,317 60,319 102,315 133,309 147,308 162,310 166,312 175,340 183,344 203,355 233,358 283,361 335,362 340,353 349,338 373,329 389,320 393,258 398,253 403,254 408,237 413,224 423,223 430,221 437,221 442,226 447,227 452,231 462,232 481,232 495,225 505,223 530,223 567,225 605,228 612,231 663,231 757,229", "#fff5ee", 2);
    body += poly("11,226 25,243 35,262 40,267 45,273 54,291 68,304 78,309 103,311 128,303 147,300 162,310 171,327 185,358 200,384 213,395 247,409 267,411 280,410 307,405 327,399 336,395 341,390 350,365 373,317 389,296 394,299 408,294 413,284 428,273 437,264 455,267 468,267 477,263 490,254 500,242 515,234 537,234 553,240 573,253 603,251 617,259 627,256 643,248 670,245 693,238 707,242 722,248 747,242 757,238", "#ff8c00", 2);
    body += poly("11,179 25,199 35,212 40,215 45,220 58,242 68,251 83,260 103,267 123,269 147,268 162,277 171,289 185,323 200,348 213,362 247,379 267,382 293,382 307,375 317,372 331,370 336,367 350,327 373,283 389,262 403,252 413,236 418,229 437,218 443,216 461,224 477,222 490,214 505,201 517,200 538,203 553,211 570,224 607,227 613,231 623,229 642,222 665,218 675,213 698,210 718,221 728,221 757,217", "#00ff00", 2);

    body += text(398, 188, "H3: 25559.45", ORANGE, "wide", "end") + text(398, 198, "Pivot: 25554.57", SKY, "wide", "end") + text(398, 388, "L4: 25457.75", GREEN, "wide", "end");
    body += text(771, 146, "H3: 25580.96", ORANGE, "wide", "end") + text(771, 299, "Pivot: 25502.90", SKY, "wide", "end");
    body += text(771, 306, "L3: 25499.23", GREEN, "wide", "end") + text(771, 387, "L4: 25458.37", GREEN, "wide", "end");
    body += text(34, 139, "NIFTY-I - 5M -  CMP: 25541.10 - 07-07-2025 15:30", "#fff");
    body += '<path d="M17 139l7-6q-1-4 4-4l-2 3 2 2 2-1q-1 4-5 3l-6 5z" fill="#fff"/>';
    body += arrow(429, 369, 446, 288, "450,272 437,288 456,292");

    document.getElementById("nifty").innerHTML =
        clip("nifty-clip", 10, 123, 762, 367) +
        rect(10, 122, 822, 388, "#202020") +
        rect(11, 124, 759, 364, "#3e3e3e") +
        `<g clip-path="url(#nifty-clip)">${body}</g>` +
        rect(10.5, 123.5, 760, 365, "none", 'stroke="#fff"') +
        line(831.5, 123, 831.5, 510, "#aaa", 1, "1 1") +
        scale(773, 197, 73, "25550.43 25513.21 25475.99 25438.76", "#fff") +
        tag(772, 221, "25541.10", "#f0a000") +
        text(258, 500, "04/07 13:05", "#fff", "", "middle") + text(503, 500, "07/07 11:00", "#fff", "", "middle");
}

function series(ys, c, color) {
    return poly(ys.split(" ").map((v, i) => `${(c.x0 + i * c.dx).toFixed(1)},${v}`).join(" "), color, 2);
}

function draw25200() {
    const c = {
        left: 848, top: 130, bottom: 488, split: 363, x0: 849, dx: 12.26, y0: 142.7, dy: 5.11, rx: 3.2, bw: 3, session: 1118.5,
        columns: "10,15 10,14 11,20 17,19 18,32 27,31 28,33 29,32 30,32 27,31 28,32 9,31 10,12 4,11 5,8 0,7 1,8 4,7 5,7 4,6 5,7 3,6 4,30 25,29 26,29 11,28 12,25 5,24 6,22 9,21 10,27 24,26 25,27 24,26 25,28 20,27 21,27 19,26 20,22 8,21 9,20 17,19 18,24 21,23 22,34 24,33 25,34 20,33 21,26 21,25 22,27 17,26 18,23 19,22 20,33 26,32 27,31 20,30 21,25 19,24",
        boxes: [[11, 9, 31, BLACK], [13, 7, 11, BLACK], [13, 4, 6, RED], [15, 0, 7, BLACK], [21, 3, 6, BLACK], [25, 11, 18, RED], [27, 14, 24, BLACK], [27, 5, 13, RED], [35, 20, 27, BLACK], [37, 19, 26, BLACK], [39, 14, 21, BLACK], [39, 8, 13, RED], [44, 28, 34, BLUE], [47, 20, 33, BLACK], [51, 17, 26, BLACK], [54, 26, 33, BLUE], [57, 20, 24, RED], [59, 19, 24, BLACK]],
        sell: "0,2,15.5 2,4,20.5 4,6,32.5 14,22,8.5 20,22,7.5 28,30,22.5 26,34,27.5 36,44,27.5 40,42,20.5 42,44,24.5 48,50,26.5 52,54,23.5",
        buy: "3,11,16.5 7,9,28.5 9,11,26.5 11,13,8.5 13,15,3.5 19,21,3.5 23,25,24.5 25,27,10.5 31,39,18.5 33,35,23.5 35,37,19.5 45,47,23.5 49,51,20.5 55,57,25.5 57,59,19.5",
        green: "43,51,19.5",
        buyDash: "10,22,32.5 24,44,29.5 26,30,25.5",
        sellDash: "21,1609,2.5 29,39,8.5",
        average: "0,7.5 1,7.5 2,9.5 3,9.5 4,15.5 5,16.5 6,16.5 7,17.5 9,17.5 10,18.5 11,16.5 14,16.5 15,15.5 19,15.5 20,14.5 21,14.5 22,30.5 23,26.5 24,27.5 25,20.5 26,21.5 27,16.5 28,17.5 29,16.5 30,17.5 32,17.5 33,18.5 43,18.5 44,19.5 45,19.5 46,20.5 55,20.5 56,21.5 59,21.5",
        pink: ["0,6.5 1,6.5 2,9.4 3,9.4 4,16.5 6,18.5 7,18.5 9,20.5 10,20.5 10,25.5 6,25.5 5,24.5 4,20.5 3,13.5 2,12.5 1,9.5 0,9.5",
            "21,7.5 22,11 23,14.5 24,15.5 24,22.5 23,21.5 22,11.5 21,13.5",
            "41,17.5 42,2.5 43,3.5 44,16.5 53,16.5 54,17.5 59,17.5 59,34.5 57,38.5 56,23.5 55,23.5 54,21.5 53,26.5 52,26.5 51,27.5 50,31.5 49,40.5 47,40.5 46,24.5 45,22.5 44,22.5 43,8.5 42,7.5 41,24.5"],
        blue: ["10,20.5 10.5,24 10,25.5",
            "11,22.5 12,15.5 13,11.5 14,11.5 15,8.5 19,8 20,7.8 21,7.5 21,13.5 20,16.5 18,16.5 17,17.5 15,17.5 14,20.5 13,20.5 12,24.5 11.2,26.5 10.5,24",
            "24,15.5 25,25.5 29,25.5 30,-6 31,11.5 32,11.5 33,15.5 34,18.3 37,18.5 38,19.5 39,17.5 41,17.5 41,24.5 39,24.5 38,30.5 37,30.5 36,34.5 25,34.5"],
        levels: [[1118, 201.5, 1598, SKY], [1118, 308.5, 1598, GREEN]]
    };
    let body = pointFigure(c);
    [[1122, 316], [1220, 300], [1429, 219], [1453, 229], [1367, 285], [1553, 219]].forEach(s => body += star(s[0], s[1]));
    [[1009, 135, "HP"], [1181, 140, "HP"], [1156, 170, "HP"], [1328, 155, "HP"], [1549, 216, "HP"], [1390, 342, "LP"], [1513, 337, "LP"]].forEach(m => body += text(m[0], m[1], m[2], BLACK, "mark", "middle"));
    body += text(1550, 224, "P", "#8a2be2", "level", "middle");
    body += text(1592, 199, "Pivot:351.20", SKY, "level", "end") + text(1590, 306, "L3: 316.35", GREEN, "level", "end");
    body += text(853, 145, "NIFTY 10-Jul-2025 CE 25200+NIFTY 10-Jul-2025 PE 25200 - 1M - 0.5% x 3 CMP: 336.35 - 07-07-2025 15:29", "#222");
    body += line(848, 364, 1610, 364, "#808080", 2);
    body += text(851, 379, "AvgColumnLength (20,20) XAvg:  3.65 OAvg:  4.20 Avg:  7.85", "#222", "study");
    body += series("474 486 486 486 486 486 486 486 486 486 486 475 475 473 473 472 471 471 471 472 472 472 473 472 471 463 463 453 453 448 448 461 461 464 464 464 464 462 462 454 454 455 455 456 457 462 462 465 465 470 470 466 466 465 466 466 466 464 464 469", c, BLUE);
    body += series("449 449 457 457 463 463 465 465 471 471 474 475 475 475 476 476 473 474 475 475 477 477 466 466 473 473 468 468 460 460 452 452 452 452 452 452 452 452 452 452 447 447 459 459 453 453 456 456 463 463 470 470 469 469 462 462 463 463 462 462", c, RED);
    body += line(849, 451.5, 1609, 451.5, "#e020e0", 1, "5 2");

    let axis = scale(1611, 155, 21, "367 358 351 344 337 330 324 318 311 305") + scale(1611, 389, 24.5, "10.00 8.00 6.00 4.00");
    axis += tag(1611, 248, "337.13", "#f5a81c") + tag(1611, 423, "7.85", "#f81818") + tag(1611, 468, "", BLUE) + tag(1611, 475, "3.65", "url(#tag-white)");
    frame("straddle-25200", c, body, axis);
}

function draw25600() {
    const c = {
        left: 10, top: 559, bottom: 917, x0: 10.5, dx: 12.27, y0: 577.3, dy: 4.457, rx: 3.2, bw: 3, session: 464.5,
        columns: "14,17 11,16 12,17 11,16 12,18 14,17 15,20 17,19 18,20 17,19 18,29 24,28 25,32 22,31 23,27 0,26 1,6 3,5 4,11 7,10 8,11 8,10 9,13 8,12 9,12 9,11 10,15 12,14 13,16 13,15 14,20 17,19 18,22 15,21 16,21 18,20 19,44 41,43 42,62 59,61 60,65 54,64 55,57 54,56 55,59 55,58 56,68 52,67 53,66 56,65 57,68 65,67 66,68 64,67 65,71 64,70 65,69 62,68 63,72 67,71",
        boxes: [[15, 0, 26, BLACK], [18, 7, 11, BLUE], [46, 62, 68, BLUE], [47, 52, 67, BLACK], [57, 62, 68, BLACK]],
        sell: "2,10,20.5 2,4,17.5 4,6,18.5 10,12,29.5 16,18,6.5 18,26,13.5 20,22,11.5 24,26,12.5 26,28,15.5 28,30,16.5 30,32,20.5 28,36,22.5 34,36,21.5 36,38,44.5 38,40,62.5 38,46,65.5 42,44,57.5 44,46,59.5 46,54,68.5 48,50,66.5 50,58,71.5 56,58,69.5",
        buy: "0,1,12.5 7,15,16.5 11,13,23.5 13,15,21.5 31,33,16.5 39,41,58.5 45,47,54.5 51,53,64.5 55,57,63.5",
        green: "39,47,53.5",
        buyDash: "14,36,27.5",
        sellDash: "35,771,17.5 37,771,40.5",
        average: "0,16.5 1,15.5 9,15.5 10,17.5 11,17.5 12,18.5 14,18.5 15,14.5 17,14.5 18,13.5 31,13.5 32,14.5 35,14.5 36,19.5 38,57.5 39,57.5 40,59.5 41,58.5 45,58.5 46,59.5 47,58.5 48,59.5 49,58.5 50,59.5 52,59.5 53,60.5 57,60.5 58,61.5 59,61.5",
        pink: ["0,4.5 5,4.5 6,5.5 7,9.5 8,11.5 9,11.5 10,17 11,18.5 12,20.5 14,20.5 14,30.5 13,30.5 12,24.5 11,23 10,20.5 9,15.5 8,14.8 7,13.3 6,8.7 5,19.5 1,19.5 0,14",
            "29,11.5 29.5,15 29,18.5",
            "29.6,15 30,12.5 31,12.5 32,14.5 35,14.5 36,20.3 36.5,25 37,27.5 38,36.5 39,40 40,43.5 44,43.5 45,49.5 46,50.5 53,50.5 54,55.5 55,57.5 57,57.5 58,59.5 59,59.5 59,71.5 58,71.5 57,72.5 56,62.5 54,62.5 53,58.5 52,56.5 51,56.5 50,54.5 49,64 48,62 47,70 46.6,54 46,55 45,60.5 43,60.5 42,65.5 41,66.5 40,56.5 39,53.5 38,47 37,37 36,26 35,20.5 33,20 31,14.5 30,14.5"],
        blue: ["14,20.5 14.5,24 14,30.5",
            "15.3,14.5 16,10.5 17,10.5 18,.5 20,2.5 21,2.5 22,7.5 25,7.5 26,9.5 28,11.5 29,11.5 29,18.5 23,18.5 22,19.5 21,22.5 17,22.5 16,24.5 15.3,25.3"],
        levels: []
    };
    let body = pointFigure(c);
    [[87, 684], [456, 787], [578, 894]].forEach(s => body += star(s[0], s[1]));
    [[24, 610], [233, 659], [540, 802]].forEach(p => body += text(p[0], p[1], "P", "#8a2be2", "level", "middle"));
    body += text(233, 649, "LP", BLACK, "mark", "middle") + text(577, 904, "LP", BLACK, "mark", "middle");
    body += text(15, 574, "NIFTY 10-Jul-2025 CE 25600+NIFTY 10-Jul-2025 PE 25600 - 1M - 0.5% x 3 CMP: 255.85 - 07-07-2025 15:30", "#222");
    const axis = scale(773, 592, 32.6, "353 339 327 316 304 293 283 272 263 256") + tag(772, 885, "256.25", "#f5a81c");
    frame("straddle-25600", c, body, axis);
}

function draw25700() {
    const c = {
        left: 848, top: 559, bottom: 917, split: 861, x0: 849, dx: 9.275, y0: 576.7, dy: 2.867, rx: 2.4, bw: 2.3, session: 1266.5, thick: 2,
        columns: "16,24 18,23 19,24 21,24 22,24 21,24 22,27 24,26 25,31 28,30 29,31 27,30 28,35 23,34 24,29 0,28 1,3 -1,2 0,4 1,3 2,5 2,4 3,9 6,8 7,10 7,9 8,12 6,11 7,14 9,13 10,14 10,14 11,14 11,13 12,17 14,16 15,20 13,19 14,19 15,18 16,46 42,45 43,47 45,47 46,47 37,47 38,55 51,55 52,55 52,54 53,65 56,64 57,65 51,64 52,54 51,53 52,56 51,55 52,58 55,58 56,58 55,57 56,63 59,62 60,69 59,68 60,62 45,61 46,59 48,59 49,64 60,63 61,63 57,62 58,67 56,66 57,61 54,60 55,66 62,65",
        boxes: [[13, 23, 34, BLACK], [15, 0, 28, BLACK], [17, -1, 2, BLACK], [45, 42, 47, BLACK], [45, 37, 41, RED], [50, 59, 65, BLUE], [53, 51, 64, BLACK], [62, 59, 63, BLUE], [64, 64, 69, BLUE], [67, 53, 61, BLACK], [67, 45, 52, RED], [75, 56, 66, BLACK], [77, 54, 60, BLACK]],
        sell: "0,2,24.5 0,6,25.5 6,8,27.5 4,12,31.5 16,18,3.5 18,20,4.5 20,22,5.5 16,24,9.5 24,26,10.5 26,28,12.5 27,34,15.5 28,34,14.5 34,36,17.5 32,40,20.5 38,40,19.5 40,42,46.5 38,46,48.5 42,50,56.5 48,50,55.5 54,56,54.5 56,58,56.5 54,62,59.5 60,62,58.5 62,64,63.5 66,74,64.5 68,70,60.5 72,74,63.5 76,78,61.5",
        buy: "9,11,27.5 11,13,26.5 15,17,-.5 25,27,6.5 35,37,13.5 43,45,44.5 51,53,55.5 59,67,54.5 65,67,58.5 71,73,59.5 73,75,56.5 75,77,55.5",
        green: "7,15,22.5",
        buyDash: "14,40,29.5 66,70,62.5",
        sellDash: "39,1609,14.5 45,1609,36.5 69,1609,47.4",
        average: "0,20.5 7,20.5 8,21.5 12,21.5 13,22.5 14,22.5 14.6,18.5 16,16.5 17,16.5 18,15.4 25,15.4 26,14.5 39,14.5 40,20.3 42,22.5 44,22.5 46,52.5 49,52.5 50,56.5 52,57.5 53,56.5 62,56.5 64,58.5 66,58.5 67,56.5 69,56.5 70,57.5 79,57.5",
        pink: ["11,26.5 12,24 12,29 11,32.5",
            "25,12.5 26,4.5 29,4.5 30,5.5 33,5.5 34,7.5 35,8.5 36,11.3 39,11.3 40,20 41,26 42,28.5 43,28.5 44,31.5 46,31.5 47,40.5 48,40.5 49,41.5 50,46.5 58,46.5 59,47.5 60,50 62,53.5 63,53.5 64,57.5 66,57.5 66,64 65,67 64,58.5 62,56 57,56 56,60 54,67 53,70 52,62 51,55 50,50 49,49 48,47.5 45,47 44,42 43,40.5 42,38.5 41,36.5 40,22 36,16 34,14 33,8.5 30,8.5 29,7.5 27,7.5 26,10",
            "69.5,47 70,28.5 71,30 72,33 73,40 74,46.5 78,47.5 79,50 79,60 77,56 75,55 73,51 72,47.5 70,47.5"],
        blue: ["0,26.5 5,26.3 6,15.5 7,22 8,24.5 11,26.5 11,32.5 0,32.5",
            "12,29 13,40.5 14,40.5 15,20 16,8.5 17,6.5 21,6.5 22,4 24,5.5 25,5.5 25,12.5 22,12.5 21,19.5 17,19.5 16,20.7 15,24 14,35.3 13,35.3",
            "67,64 67.5,52 68,39 69,48 70,60 70,63.5 68,63.5"],
        levels: [[1266, 578, 1601, ORANGE, 4], [1266, 641, 1601, ORANGE, 4], [1266, 661.5, 1601, SKY], [1266, 793, 1601, GREEN, 4]]
    };
    let body = pointFigure(c);
    body += line(1275.5, 738, 1275.5, 850, RED, 3) + line(1270, 795.5, 1281, 795.5, RED, 2) + line(1270, 850.5, 1281, 850.5, RED, 2);
    [[973, 631], [908, 668], [1224, 720], [1345, 714], [1363, 714]].forEach(s => body += star(s[0], s[1]));
    [[897, 628], [953, 646], [1101, 585], [1194, 606], [1267, 674], [1361, 714], [1417, 726], [1528, 732]].forEach(m => body += text(m[0], m[1], "MT", RED, "mark", "middle"));
    [[926, 680], [963, 691], [1092, 626], [1445, 789], [1500, 775], [1538, 783]].forEach(m => body += text(m[0], m[1], "MB", BLUE, "mark", "middle"));
    [[1268, 670, "HP"], [1473, 693, "HP"], [1316, 780, "LP"], [1427, 775, "LP"], [1446, 792, "LP"]].forEach(m => body += text(m[0], m[1], m[2], BLACK, "mark", "middle"));
    body += text(1595, 575, "H4: 418.03", ORANGE, "level", "end") + text(1595, 638, "H3: 374.71", ORANGE, "level", "end");
    body += text(1595, 659, "Pivot:362.53", SKY, "level", "end") + text(1593, 790, "L3: 288.09", GREEN, "level", "end");
    body += arrow(1345, 823, 1360, 756, "1364,742 1350,758 1369,763");
    body += line(848, 861, 1610, 861, "#808080", 2);
    body += text(1280, 808, "285.97", RED, "target") + text(1280, 863, "260.11", RED, "target");
    body += text(853, 574, "NIFTY 10-Jul-2025 CE 25700+NIFTY 10-Jul-2025 PE 25700 - 1M - 0.5% x 3 CMP: 305.15 - 07-07-2025 15:29", "#222");
    body += text(851, 876, "AvgColumnLength (20,20) XAvg:  3.90 OAvg:  4.25 Avg:  8.15", "#222", "study");
    body += poly("849,890 867,892 876,894 886,894 894,899 913,901 923,901 932,904 960,903 969,901 979,901 988,896 1017,897 1034,898 1071,899 1146,898 1155,900 1164,900 1174,908 1211,907 1257,906 1266,904 1313,905 1331,904 1341,900 1461,901 1471,898 1489,896 1508,896 1526,899 1536,899 1545,897 1582,896", BLUE, 2);
    body += poly("849,895 858,895 867,897 895,897 904,896 913,896 923,898 932,898 941,901 965,899 979,901 1025,902 1034,904 1109,904 1130,903 1146,904 1173,904 1211,902 1220,895 1266,896 1275,891 1303,893 1313,891 1338,889 1350,890 1396,890 1406,898 1433,897 1443,895 1452,895 1461,900 1490,896 1526,898 1536,895 1582,894", RED, 2);
    body += line(849, 889.5, 1609, 889.5, "#e020e0", 1, "5 2");

    let axis = scale(1611, 586, 27.5, "412 392 372 356 339 324 308 293 280 267") + scale(1611, 872, 12, "8.00 6.00 4.00 2.00");
    axis += tag(1611, 762, "306.65", "#f5a81c") + tag(1611, 878, "8.15", "#f81818") + tag(1611, 901, "", BLUE) + tag(1611, 902, "3.90", "url(#tag-white)");
    frame("straddle-25700", c, body, axis);
}

drawNifty();
draw25200();
draw25600();
draw25700();
```
